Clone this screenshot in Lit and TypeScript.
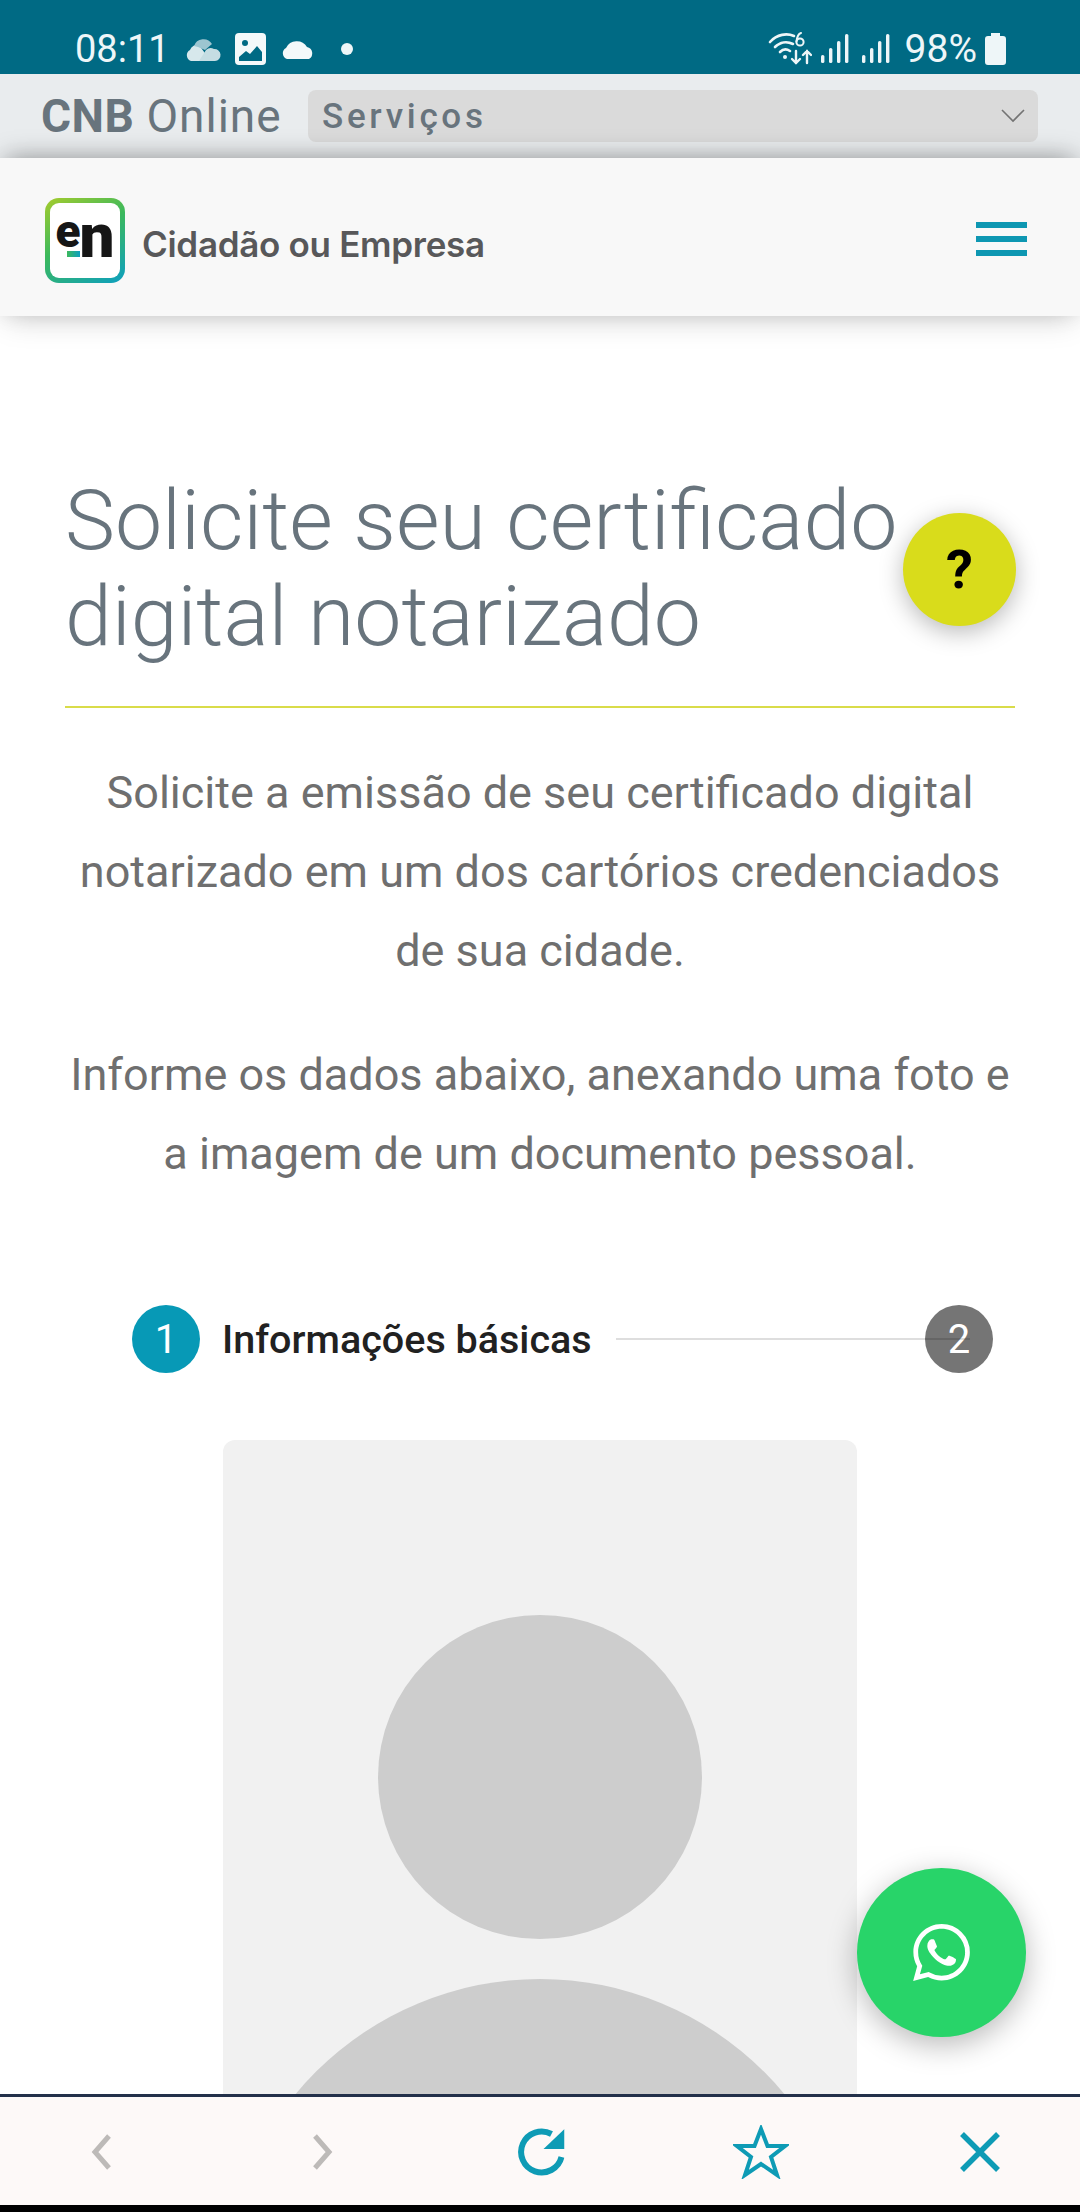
import { LitElement, html, css, svg } from 'lit';
import { customElement } from 'lit/decorators.js';

const wifiIcon = svg`<svg width="44" height="33" viewBox="0 0 44 33" fill="none" stroke="#eef6f8" stroke-linecap="round">
  <path d="M2 10 C9 2 19 1 26 4" stroke-width="2.6"/>
  <path d="M7 15 C12 10 19 9 25 12" stroke-width="2.6"/>
  <path d="M12 20 C15 17 19 17 22 19" stroke-width="2.6"/>
  <circle cx="17" cy="25" r="2" fill="#eef6f8" stroke="none"/>
  <circle cx="32" cy="10" r="3.6" stroke-width="2"/>
  <path d="M28.5 9.5 C29 5 30 2 33 1" stroke-width="2"/>
  <path d="M28 19 V31 M24 27 L28 31 L32 27" stroke-width="2.4"/>
  <path d="M39 31 V19 M35 23 L39 19 L43 23" stroke-width="2.4"/>
</svg>`;

const signalIcon = svg`<svg width="28" height="30" viewBox="0 0 28 30" fill="#eef6f8">
  <rect x="0" y="21" width="3.4" height="8" rx="1.6"/>
  <rect x="8" y="14" width="3.4" height="15" rx="1.6"/>
  <rect x="16" y="7" width="3.4" height="22" rx="1.6"/>
  <rect x="24" y="0" width="3.4" height="29" rx="1.6"/>
</svg>`;

@customElement('app-root')
export class AppRoot extends LitElement {
    static styles = css`
        :host {
            display: flex;
            flex-direction: column;
            position: relative;
            height: 2212px;
            overflow: hidden;
            background: #fff;
            font-family: Roboto, sans-serif;
        }
        .status {
            height: 74px;
            flex: none;
            box-sizing: border-box;
            padding: 23px 74px 0 75px;
            background: #006a84;
            color: #eef6f8;
            display: flex;
            align-items: center;
            justify-content: space-between;
            font-size: 38px;
            line-height: 40px;
        }
        .status-left, .status-right { display: flex; align-items: center; }
        .time { width: 91px; white-space: nowrap; }
        .onedrive { margin-left: 19px; }
        .gallery { margin-left: 14px; }
        .cloud { margin-left: 14px; }
        .dot {
            width: 12px;
            height: 12px;
            border-radius: 50%;
            background: #eef6f8;
            margin-left: 25px;
        }
        .sim1 { margin-left: 9px; display: flex; }
        .sim2 { margin-left: 13px; display: flex; }
        .pct { margin: 0 8px 0 15px; font-size: 39px; white-space: nowrap; }

        .browser {
            height: 84px;
            flex: none;
            box-sizing: border-box;
            padding: 16px 42px 16px 41px;
            background: #e9ecee;
            display: flex;
            gap: 26px;
            align-items: flex-start;
        }
        .brand {
            width: 241px;
            flex: none;
            font-size: 46px;
            line-height: 52px;
            color: #68747d;
            white-space: nowrap;
            letter-spacing: 1px;
        }
        .brand b { font-weight: 700; letter-spacing: 0.5px; margin-right: 12px; }
        .select {
            flex: 1;
            height: 52px;
            box-sizing: border-box;
            padding: 0 13px 0 14px;
            border-radius: 8px;
            background: #dadada;
            display: flex;
            align-items: center;
            justify-content: space-between;
            color: #68747d;
            font-size: 35px;
            font-weight: 500;
            letter-spacing: 3.7px;
        }

        .nav {
            height: 158px;
            flex: none;
            box-sizing: border-box;
            padding: 40px 53px 0 45px;
            background: #f8f8f8;
            box-shadow:
                0 -6px 24px -6px rgba(0, 0, 0, 0.34),
                0 8px 30px -6px rgba(0, 0, 0, 0.18);
            display: flex;
            justify-content: space-between;
            position: relative;
        }
        .logo { display: flex; align-items: flex-start; gap: 17px; }
        .logo-box {
            width: 80px;
            height: 85px;
            box-sizing: border-box;
            border: 5px solid transparent;
            border-radius: 14px;
            background:
                linear-gradient(#fff, #fff) padding-box,
                linear-gradient(150deg, #a6cc2c 0%, #3cb95c 45%, #0d9fc0 100%) border-box;
            position: relative;
            display: flex;
            justify-content: center;
            font-weight: 900;
            color: #161616;
            white-space: nowrap;
        }
        .logo-e { font-size: 46px; line-height: 40px; vertical-align: 10px; }
        .logo-n { font-size: 62px; line-height: 66px; margin-left: -1px; }
        .logo-mark {
            position: absolute;
            left: 17px;
            top: 48px;
            width: 13px;
            height: 6px;
            background: linear-gradient(90deg, #3cb95c, #0d9fc0);
        }
        .logo-name {
            font-family: Inter, sans-serif;
            font-size: 35px;
            line-height: 92px;
            font-weight: 600;
            letter-spacing: -0.3px;
            color: #58585a;
            white-space: nowrap;
        }
        .menu {
            width: 51px;
            display: flex;
            flex-direction: column;
            gap: 8px;
            margin-top: 24px;
        }
        .menu span { height: 6px; background: #0e97b2; }

        main {
            flex: 1;
            min-height: 0;
            overflow: hidden;
            padding: 0 65px;
        }
        h1 {
            margin: 0;
            padding: 157px 0 0;
            font-size: 84.2px;
            line-height: 96px;
            font-weight: 300;
            color: #68747d;
        }
        .rule {
            height: 2px;
            background: #d9dc4a;
            margin: 41px 0 0;
        }
        .intro {
            margin: 45px -5px 0;
            text-align: center;
            font-size: 45px;
            line-height: 79px;
            color: #6f6f6f;
        }
        .steps {
            display: flex;
            align-items: center;
            margin: 112px 22px 0 67px;
        }
        .step-no {
            width: 68px;
            height: 68px;
            flex: none;
            border-radius: 50%;
            display: flex;
            align-items: center;
            justify-content: center;
            color: #fff;
            font-size: 40px;
        }
        .step-no.on { background: #0799b6; }
        .step-no.off { background: #757575; }
        .step-title {
            margin: 0 24px 0 22px;
            font-size: 39.5px;
            font-weight: 500;
            color: #212121;
            white-space: nowrap;
        }
        .step-line {
            flex: 1;
            height: 2px;
            background: rgba(0, 0, 0, 0.13);
            margin-right: -23px;
            position: relative;
            z-index: 1;
        }
        .step-line + .step-no { margin-left: -22px; }
        .photo {
            width: 634px;
            height: 900px;
            margin: 67px auto 0;
            background: #f1f1f1;
            border-radius: 12px;
            overflow: hidden;
            display: block;
        }

        .bottom {
            height: 111px;
            flex: none;
            box-sizing: border-box;
            border-top: 3px solid #23304a;
            background: #fdf9f8;
            position: relative;
        }
        .bottom svg { position: absolute; top: 55px; transform: translate(-50%, -50%); }
        .floor { height: 7px; flex: none; background: #000; }

        .fab {
            position: absolute;
            border-radius: 50%;
            display: flex;
            align-items: center;
            justify-content: center;
        }
        .help {
            left: 903px;
            top: 513px;
            width: 113px;
            height: 113px;
            background: #d9dc1b;
            box-shadow: 0 6px 24px rgba(0, 0, 0, 0.28);
            font-size: 54px;
            font-weight: 700;
            color: #000;
        }
        .whatsapp {
            left: 857px;
            top: 1868px;
            width: 169px;
            height: 169px;
            background: #28d469;
            box-shadow: 0 8px 30px rgba(0, 0, 0, 0.28);
        }
    `;

    render() {
        return html`
            <div class="status">
                <div class="status-left">
                    <span class="time">08:11</span>
                    <svg class="onedrive" width="36" height="26" viewBox="0 0 36 26">
                        <path d="M6 25 A6 6 0 0 1 5 14 A8 8 0 0 1 14 9 L22 20 L16 25Z" fill="#d7e8ec"/>
                        <path d="M9 10 A10 10 0 0 1 27 8 L20 14 L13 11Z" fill="#9cc5d0"/>
                        <path d="M14 25 L21 14 A7 7 0 0 1 29 13 A6 6 0 0 1 30 25Z" fill="#c5dde3"/>
                    </svg>
                    <svg class="gallery" width="31" height="32" viewBox="0 0 31 32">
                        <rect width="31" height="32" rx="4" fill="#f4f9fa"/>
                        <circle cx="10" cy="10" r="3" fill="#006a84"/>
                        <path d="M4 28 V24 L11 18 L15 21 L22 13 L27 19 V28Z" fill="#006a84"/>
                    </svg>
                    <svg class="cloud" width="36" height="22" viewBox="0 0 36 22">
                        <path d="M7 21 A6 6 0 0 1 6 10 A12 12 0 0 1 27 9 A6.5 6.5 0 0 1 29 21Z" fill="#f4f9fa"/>
                    </svg>
                    <span class="dot"></span>
                </div>
                <div class="status-right">
                    ${wifiIcon}
                    <span class="sim1">${signalIcon}</span>
                    <span class="sim2">${signalIcon}</span>
                    <span class="pct">98%</span>
                    <svg width="21" height="32" viewBox="0 0 21 32">
                        <path d="M6 0 H15 V3 H18 A3 3 0 0 1 21 6 V29 A3 3 0 0 1 18 32 H3 A3 3 0 0 1 0 29 V6 A3 3 0 0 1 3 3 H6Z" fill="#eef6f8"/>
                    </svg>
                </div>
            </div>

            <div class="browser">
                <div class="brand"><b>CNB</b>Online</div>
                <div class="select">
                    <span>Serviços</span>
                    <svg width="24" height="14" viewBox="0 0 24 14" fill="none" stroke="#737373" stroke-width="1.6">
                        <path d="M1 1 L12 12 L23 1"/>
                    </svg>
                </div>
            </div>

            <div class="nav">
                <div class="logo">
                    <div class="logo-box">
                        <span><span class="logo-e">e</span><span class="logo-n">n</span></span>
                        <span class="logo-mark"></span>
                    </div>
                    <span class="logo-name">Cidadão ou Empresa</span>
                </div>
                <div class="menu"><span></span><span></span><span></span></div>
            </div>

            <main>
                <h1>Solicite seu certificado digital notarizado</h1>
                <div class="rule"></div>
                <p class="intro">Solicite a emissão de seu certificado digital notarizado em um dos cartórios credenciados de sua cidade.</p>
                <p class="intro">Informe os dados abaixo, anexando uma foto e a imagem de um documento pessoal.</p>
                <div class="steps">
                    <span class="step-no on">1</span>
                    <span class="step-title">Informações básicas</span>
                    <span class="step-line"></span>
                    <span class="step-no off">2</span>
                </div>
                <svg class="photo" viewBox="0 0 634 900">
                    <circle cx="317" cy="337" r="162" fill="#cdcdcd"/>
                    <circle cx="317" cy="856" r="317" fill="#cdcdcd"/>
                </svg>
            </main>

            <div class="bottom">
                <svg style="left:102px" width="22" height="36" viewBox="0 0 22 36" fill="none" stroke="#bdbab8" stroke-width="5"><path d="M18 2 L4 18 L18 34"/></svg>
                <svg style="left:322px" width="22" height="36" viewBox="0 0 22 36" fill="none" stroke="#bdbab8" stroke-width="5"><path d="M4 2 L18 18 L4 34"/></svg>
                <svg style="left:541px" width="47" height="48" viewBox="0 0 47 48" fill="none">
                    <path d="M44 29 A20.5 20.5 0 1 1 34 6" stroke="#0e9bb5" stroke-width="6"/>
                    <path d="M47 1 L26 21 H47Z" fill="#0e9bb5"/>
                </svg>
                <svg style="left:761px" width="56" height="54" viewBox="0 0 56 54" fill="none">
                    <path d="M28 4 L34.5 21 H52 L38 32 L44 50 L28 39 L12 50 L18 32 L4 21 H21.5Z" stroke="#0e9bb5" stroke-width="4"/>
                </svg>
                <svg style="left:980px" width="40" height="40" viewBox="0 0 40 40" fill="none" stroke="#0e9bb5" stroke-width="5.5"><path d="M2 2 L38 38 M38 2 L2 38"/></svg>
            </div>
            <div class="floor"></div>

            <div class="fab help">?</div>
            <div class="fab whatsapp">
                <svg width="57" height="57" viewBox="0 0 24 24" fill="#fff">
                    <path d="M17.47 14.38c-.3-.15-1.76-.87-2.03-.97-.27-.1-.47-.15-.67.15-.2.3-.77.97-.94 1.16-.17.2-.35.22-.64.07-.3-.15-1.26-.46-2.39-1.47-.88-.79-1.48-1.76-1.65-2.06-.17-.3-.02-.46.13-.6.13-.13.3-.35.45-.52.15-.17.2-.3.3-.5.1-.2.05-.37-.02-.52-.07-.15-.67-1.61-.92-2.2-.24-.58-.49-.5-.67-.51h-.57c-.2 0-.52.07-.79.37-.27.3-1.04 1.02-1.04 2.48s1.07 2.88 1.21 3.07c.15.2 2.1 3.2 5.08 4.49.71.3 1.26.49 1.69.62.71.23 1.36.2 1.87.12.57-.09 1.76-.72 2.01-1.41.25-.7.25-1.29.17-1.41-.07-.12-.27-.2-.57-.35zM12.05 21.8h-.01a9.87 9.87 0 0 1-5.03-1.38l-.36-.21-3.74.98 1-3.65-.24-.37a9.86 9.86 0 0 1-1.51-5.26c0-5.45 4.44-9.88 9.89-9.88 2.64 0 5.12 1.03 6.99 2.9a9.83 9.83 0 0 1 2.89 6.99c0 5.45-4.44 9.88-9.88 9.88zM20.46 3.49A11.82 11.82 0 0 0 12.05 0C5.5 0 .16 5.34.16 11.89c0 2.1.55 4.14 1.59 5.95L.06 24l6.3-1.65a11.88 11.88 0 0 0 5.68 1.45h.01c6.55 0 11.89-5.34 11.89-11.89a11.82 11.82 0 0 0-3.48-8.41z"/>
                </svg>
            </div>
        `;
    }
}
